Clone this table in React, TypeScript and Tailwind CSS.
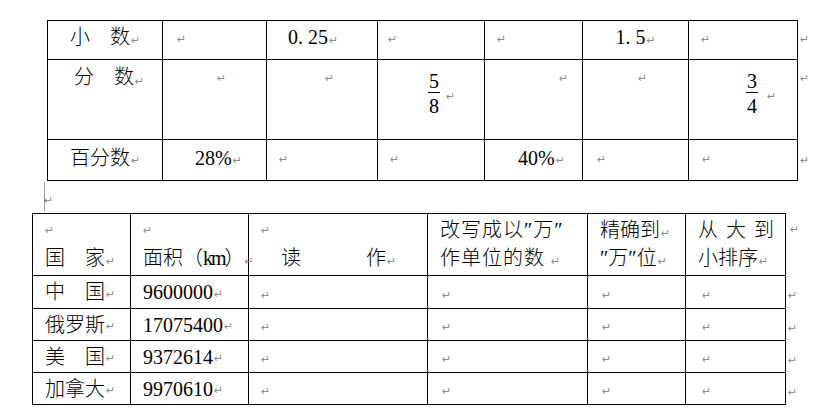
const Mark = ({ className = '' }: { className?: string }) => (
  <span className={`font-['DejaVu_Sans'] font-normal text-[11px] leading-none text-[#8c8c8c] ${className}`}>↵</span>
);

function Fraction({ top, bottom }: { top: string; bottom: string }) {
  return (
    <span className="inline-flex flex-col items-center text-[20px] leading-[19px] font-normal">
      <span>{top}</span>
      <span className="h-px w-[12px] bg-black mt-[1px] mb-[4px]" />
      <span>{bottom}</span>
    </span>
  );
}

function DecimalTable() {
  return (
    <div className="ml-[47px] grid grid-cols-[116px_104px_111px_107px_98px_106px_109px_40px] grid-rows-[40px_80px_41px] text-[20px] leading-[24px]">
      {/* 小数 */}
      <div className="border border-black flex items-center justify-center pb-[6px]">
        小　数<Mark className="ml-[1px] mt-[6px]" />
      </div>
      <div className="border-t border-r border-b border-black flex items-center pl-[14px] pb-[2px]">
        <Mark />
      </div>
      <div className="border-t border-r border-b border-black flex items-center pl-[21px] pb-[6px] font-normal">
        0. 25<Mark className="ml-[1px] mt-[6px]" />
      </div>
      <div className="border-t border-r border-b border-black flex items-center pl-[10px] pb-[2px]">
        <Mark />
      </div>
      <div className="border-t border-r border-b border-black flex items-center pl-[12px] pb-[2px]">
        <Mark />
      </div>
      <div className="border-t border-r border-b border-black flex items-center justify-center pb-[6px] font-normal">
        1. 5<Mark className="ml-[1px] mt-[6px]" />
      </div>
      <div className="border-t border-r border-b border-black flex items-center pl-[12px] pb-[2px]">
        <Mark />
      </div>
      <div className="flex items-center pl-[2px] pb-[2px]">
        <Mark />
      </div>

      {/* 分数 */}
      <div className="border-l border-r border-b border-black flex items-start pl-[26px] pt-[5px]">
        分　数<Mark className="ml-[1px] mt-[11px]" />
      </div>
      <div className="border-r border-b border-black flex items-start pl-[54px] pt-[13px]">
        <Mark />
      </div>
      <div className="border-r border-b border-black flex items-start pl-[58px] pt-[13px]">
        <Mark />
      </div>
      <div className="border-r border-b border-black flex items-start pl-[50px] pt-[12px]">
        <span className="inline-flex items-center">
          <Fraction top="5" bottom="8" />
          <Mark className="ml-[6px] mt-[4px]" />
        </span>
      </div>
      <div className="border-r border-b border-black flex items-start pl-[74px] pt-[13px]">
        <Mark />
      </div>
      <div className="border-r border-b border-black flex items-start pl-[55px] pt-[13px]">
        <Mark />
      </div>
      <div className="border-r border-b border-black flex items-start pl-[57px] pt-[12px]">
        <span className="inline-flex items-center">
          <Fraction top="3" bottom="4" />
          <Mark className="ml-[9px] mt-[4px]" />
        </span>
      </div>
      <div className="flex items-start pl-[2px] pt-[13px]">
        <Mark />
      </div>

      {/* 百分数 */}
      <div className="border-l border-r border-b border-black flex items-center justify-center pb-[5px]">
        百分数<Mark className="ml-[1px] mt-[6px]" />
      </div>
      <div className="border-r border-b border-black flex items-center pl-[32px] pb-[5px] font-normal">
        28%<Mark className="ml-[1px] mt-[6px]" />
      </div>
      <div className="border-r border-b border-black flex items-center pl-[12px] pb-[1px]">
        <Mark />
      </div>
      <div className="border-r border-b border-black flex items-center pl-[12px] pb-[1px]">
        <Mark />
      </div>
      <div className="border-r border-b border-black flex items-center pl-[33px] pb-[5px] font-normal">
        40%<Mark className="ml-[1px] mt-[6px]" />
      </div>
      <div className="border-r border-b border-black flex items-center pl-[14px] pb-[1px]">
        <Mark />
      </div>
      <div className="border-r border-b border-black flex items-center pl-[13px] pb-[1px]">
        <Mark />
      </div>
      <div className="flex items-center pl-[2px] pb-[1px]">
        <Mark />
      </div>
    </div>
  );
}

const countries = [
  { name: '中　国', area: '9600000' },
  { name: '俄罗斯', area: '17075400' },
  { name: '美　国', area: '9372614' },
  { name: '加拿大', area: '9970610' },
];

function CountryTable() {
  return (
    <div className="ml-[32px] grid grid-cols-[99px_118px_179px_160px_98px_100px_40px] grid-rows-[63px_33px_32px_32px_32px] text-[20px] leading-[28px]">
      <div className="border border-black flex flex-col pl-[12px] pt-[2px]">
        <span className="h-[28px] flex items-center"><Mark /></span>
        <span>国　家<Mark className="ml-[1px]" /></span>
      </div>
      <div className="border-t border-r border-b border-black flex flex-col pl-[12px] pt-[2px]">
        <span className="h-[28px] flex items-center"><Mark /></span>
        <span className="whitespace-nowrap">
          面积（<span className="tracking-[-2px] font-normal">km</span>）<Mark />
        </span>
      </div>
      <div className="border-t border-r border-b border-black flex flex-col pl-[12px] pt-[2px]">
        <span className="h-[28px] flex items-center"><Mark /></span>
        <span>
          <span className="ml-[20px]">读</span>
          <span className="ml-[65px]">作</span>
          <Mark className="ml-[1px]" />
        </span>
      </div>
      <div className="border-t border-r border-b border-black flex flex-col pl-[12px] pt-[2px] tracking-[1px] whitespace-nowrap">
        <span>改写成以″万″</span>
        <span>作单位的数 <Mark /></span>
      </div>
      <div className="border-t border-r border-b border-black flex flex-col pl-[12px] pt-[2px] whitespace-nowrap">
        <span>精确到<Mark className="ml-[1px]" /></span>
        <span>″万″位<Mark className="ml-[1px]" /></span>
      </div>
      <div className="border-t border-r border-b border-black flex flex-col pl-[12px] pt-[2px] whitespace-nowrap">
        <span className="tracking-[8px]">从大到</span>
        <span>小排序<Mark className="ml-[1px]" /></span>
      </div>
      <div className="flex flex-col pl-[4px] pt-[2px]">
        <span className="h-[28px] flex items-center"><Mark /></span>
      </div>

      {countries.map((c) => (
        <div key={c.name} className="contents">
          <div className="border-l border-r border-b border-black flex items-center pl-[12px]">
            {c.name}<Mark className="ml-[1px] mt-[4px]" />
          </div>
          <div className="border-r border-b border-black flex items-center pl-[12px] font-normal">
            {c.area}<Mark className="ml-[1px] mt-[4px]" />
          </div>
          <div className="border-r border-b border-black flex items-center pl-[12px] pt-[6px]">
            <Mark />
          </div>
          <div className="border-r border-b border-black flex items-center pl-[14px] pt-[6px]">
            <Mark />
          </div>
          <div className="border-r border-b border-black flex items-center pl-[14px] pt-[6px]">
            <Mark />
          </div>
          <div className="border-r border-b border-black flex items-center pl-[16px] pt-[6px]">
            <Mark />
          </div>
          <div className="flex items-center pl-[2px] pt-[6px]">
            <Mark />
          </div>
        </div>
      ))}
    </div>
  );
}

export default function App() {
  return (
    <div className="w-[837px] h-[410px] overflow-hidden bg-white text-black pt-[20px] font-light font-['Liberation_Serif','Noto_Sans_CJK_SC',serif]">
      <DecimalTable />
      <div className="h-[32px] pl-[44px] flex items-start pt-[1px]">
        <span className="w-px h-[29px] bg-[#9a9a9a]" />
        <Mark className="-ml-[1px] mt-[13px]" />
      </div>
      <CountryTable />
    </div>
  );
}
